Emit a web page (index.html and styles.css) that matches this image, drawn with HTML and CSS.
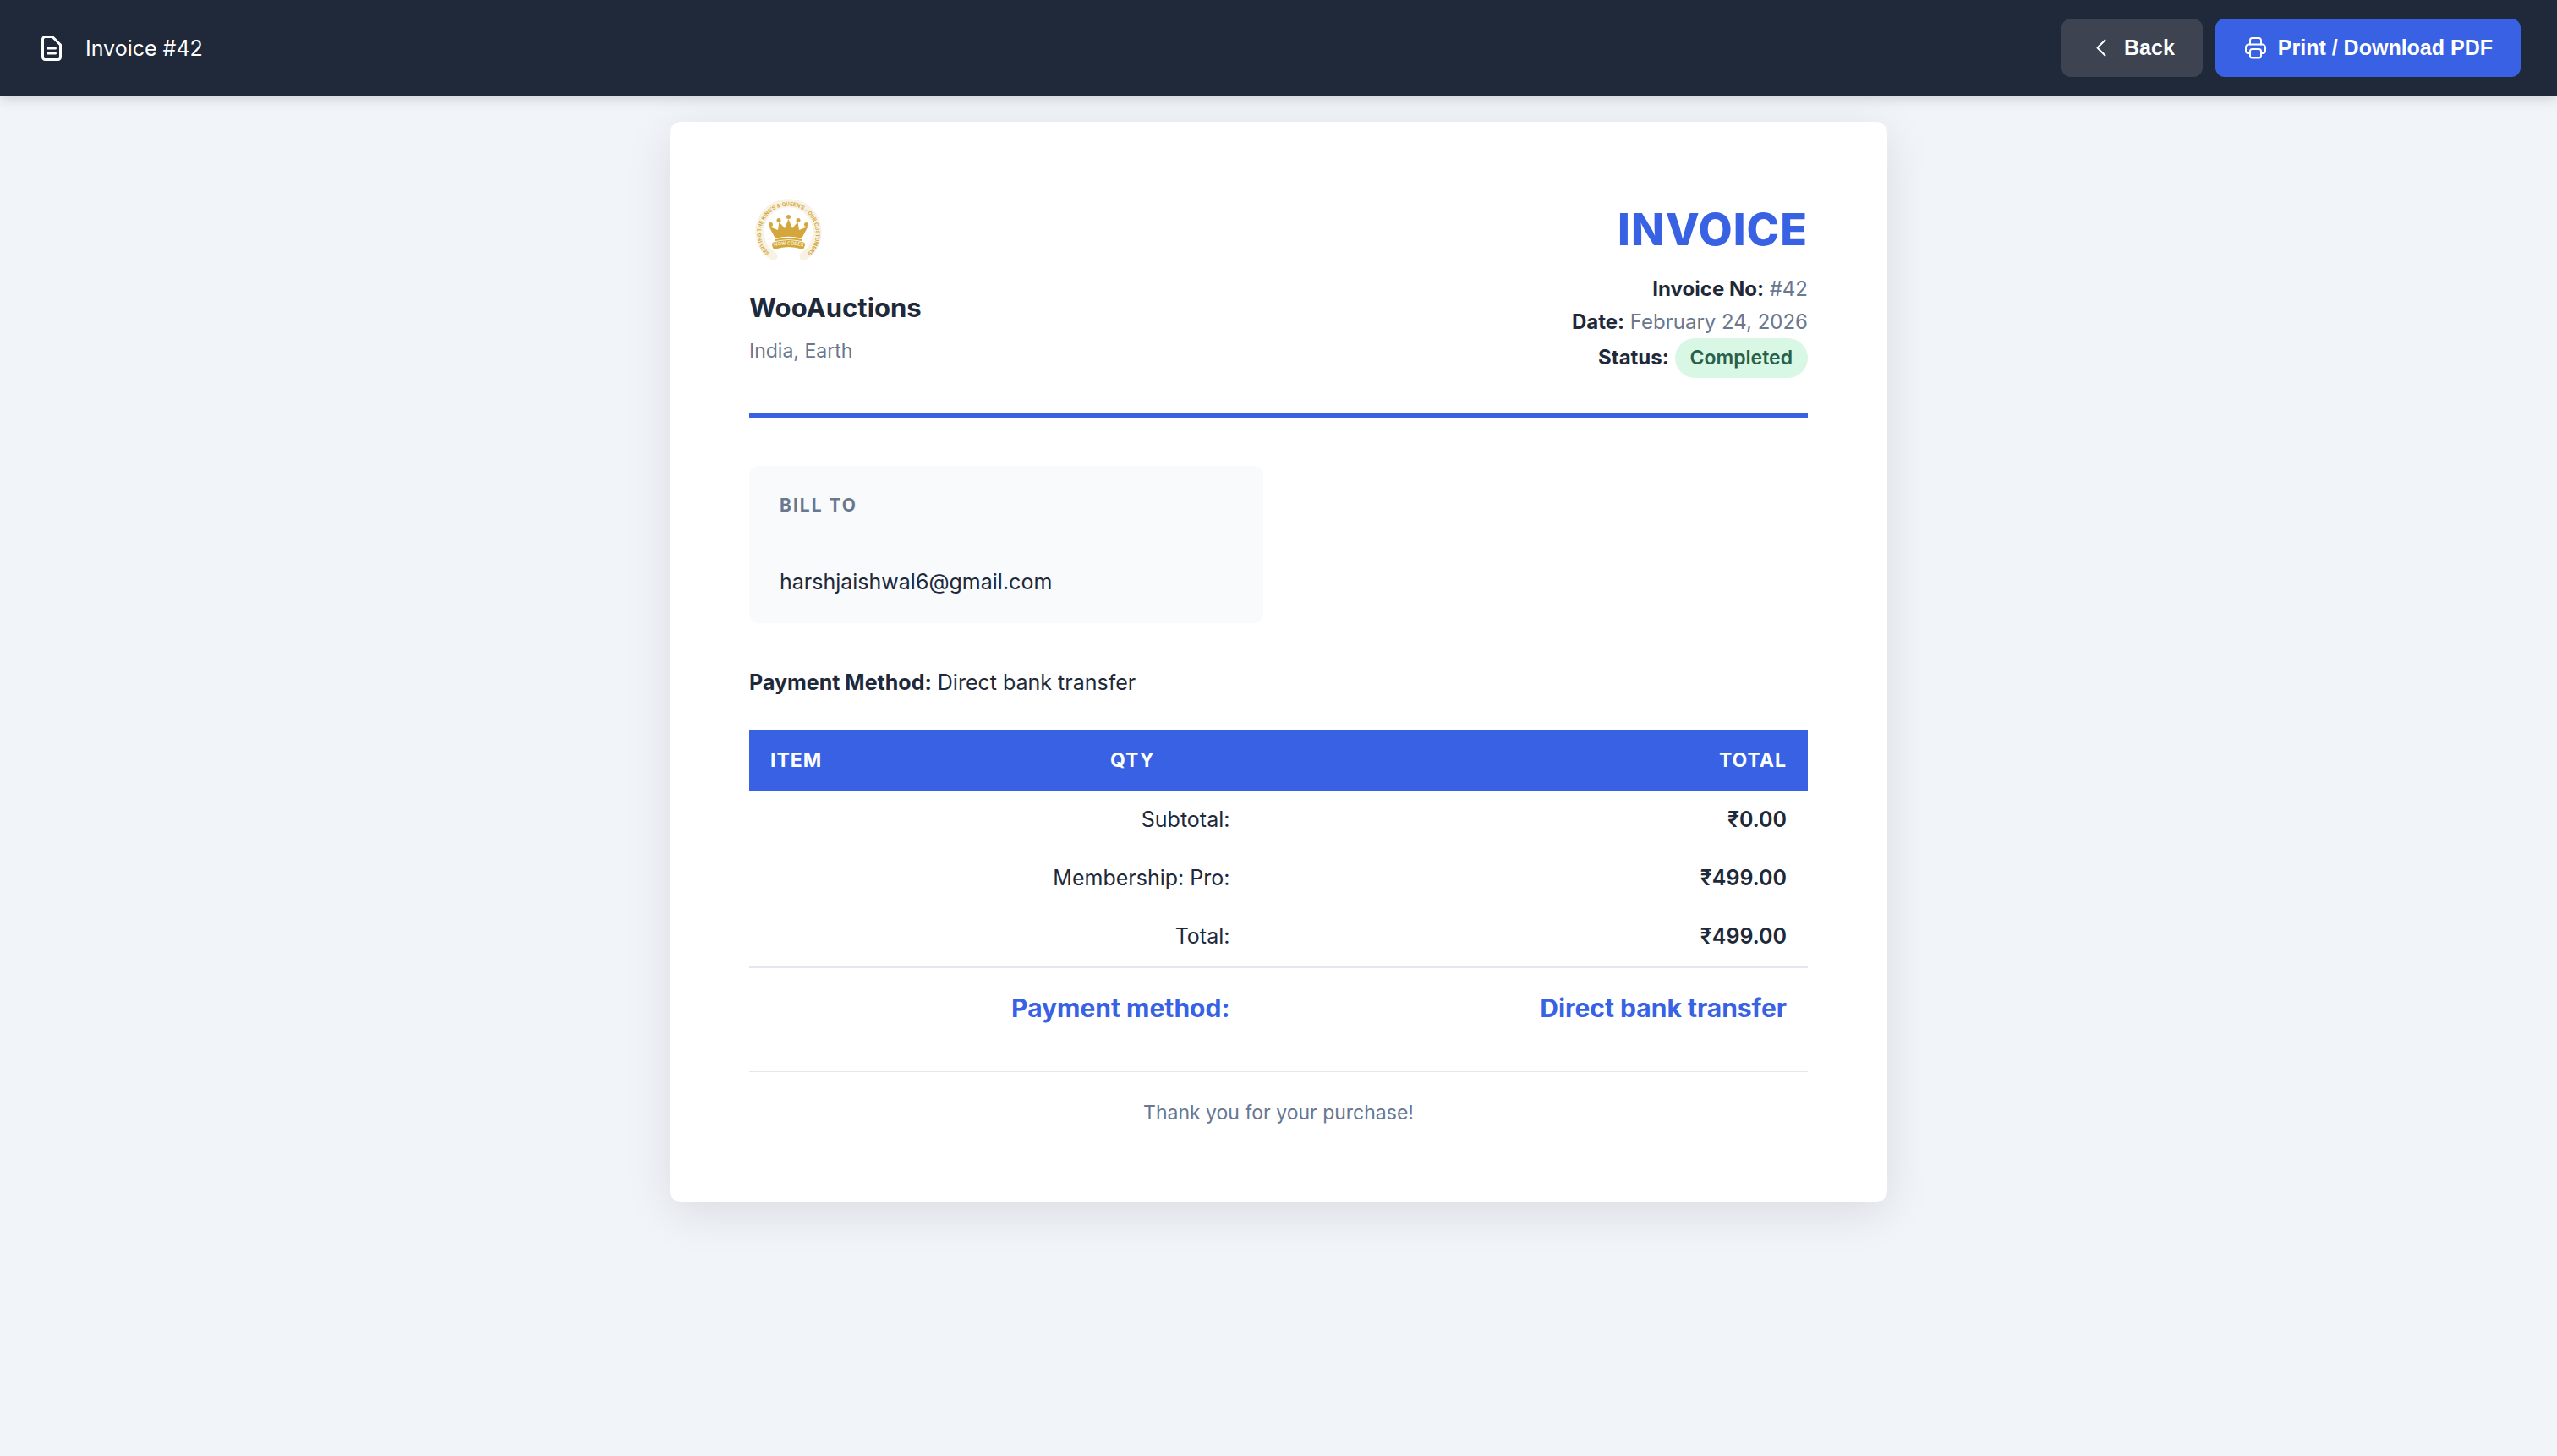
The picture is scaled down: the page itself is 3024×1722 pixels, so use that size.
FILE: index.html
```html
<!DOCTYPE html>
<html lang="en">
<head>
    <meta charset="UTF-8">
    <meta name="viewport" content="width=device-width, initial-scale=1.0">
    <title>Invoice #42</title>
    <link rel="stylesheet" href="styles.css">
</head>
<body>
    <header class="toolbar">
        <div class="toolbar-title">
            <svg class="doc-icon" viewBox="0 0 24 30" aria-hidden="true">
                <path d="M4.500 1.500h8.500l9.500 9.500V25.500a3 3 0 0 1-3 3H4.500a3 3 0 0 1-3-3V4.500a3 3 0 0 1 3-3z"/>
                <path d="M7.500 15h9M7.500 21h9"/>
            </svg>
            <span>Invoice #42</span>
        </div>
        <div class="toolbar-actions">
            <button type="button" class="btn btn-back">
                <svg class="btn-icon" viewBox="0 0 29 29" aria-hidden="true">
                    <path d="M18.500 5.500l-9 9 9 9"/>
                </svg>
                Back
            </button>
            <button type="button" class="btn btn-print" onclick="window.print()">
                <svg class="btn-icon" viewBox="0 0 29 29" aria-hidden="true">
                    <path d="M8 10.500V5.500a2.500 2.500 0 0 1 2.500-2.500h8a2.500 2.500 0 0 1 2.500 2.500v5"/>
                    <path d="M8 21H5.500a2.500 2.500 0 0 1-2.500-2.500V14a3.500 3.500 0 0 1 3.500-3.500h16A3.500 3.500 0 0 1 26 14v4.500a2.500 2.500 0 0 1-2.500 2.500H21"/>
                    <rect x="8" y="16" width="13" height="10.500" rx="2.500"/>
                </svg>
                Print / Download PDF
            </button>
        </div>
    </header>

    <main class="invoice">
        <div class="invoice-header">
            <div class="company">
                <svg class="logo" viewBox="0 0 184 184" role="img" aria-label="Wow Codes">
                    <path class="logo-ring" d="M57 144A68 68 0 1 1 129 144"/>
                    <path id="ringText" fill="none" d="M54 142A65 65 0 1 1 132 142"/>
                    <text class="ring-text"><textPath href="#ringText" startOffset="50%">SERVING THE KING'S &amp; QUEEN'S - OUR CUSTOMERS</textPath></text>
                    <g class="logo-crown">
                        <circle cx="51" cy="69" r="5"/>
                        <circle cx="70" cy="59" r="5"/>
                        <circle cx="93" cy="51" r="5"/>
                        <circle cx="116" cy="59" r="5"/>
                        <circle cx="135" cy="69" r="5"/>
                        <path d="M47 74l21 8 3-19 13 15 9-22 9 22 13-15 3 19 21-8-15 28Q93 93 62 102z"/>
                        <path d="M62 104Q93 97 124 104v4Q93 101 62 108z"/>
                        <path d="M57 111Q93 101 129 111q4 2 3 6l-2 7q-2 4-6 3Q93 117 62 127q-4 1-6-3l-2-7q-1-4 3-6z"/>
                    </g>
                    <path id="bandText" fill="none" d="M52 123Q93 111 134 123"/>
                    <text class="band-text"><textPath href="#bandText" startOffset="50%">WOW CODES</textPath></text>
                </svg>
                <h2 class="company-name">WooAuctions</h2>
                <p class="company-address">India, Earth</p>
            </div>
            <div class="invoice-meta">
                <h1 class="invoice-title">INVOICE</h1>
                <p><strong>Invoice No:</strong> #42</p>
                <p><strong>Date:</strong> February 24, 2026</p>
                <p><strong>Status:</strong> <span class="status">Completed</span></p>
            </div>
        </div>

        <section class="bill-to">
            <h3>BILL TO</h3>
            <p>harshjaishwal6@gmail.com</p>
        </section>

        <p class="payment"><strong>Payment Method:</strong> Direct bank transfer</p>

        <table class="items">
            <colgroup>
                <col class="col-item">
                <col class="col-qty">
                <col>
            </colgroup>
            <thead>
                <tr>
                    <th>ITEM</th>
                    <th class="center">QTY</th>
                    <th class="right">TOTAL</th>
                </tr>
            </thead>
            <tfoot>
                <tr>
                    <td colspan="2">Subtotal:</td>
                    <td class="amount">₹0.00</td>
                </tr>
                <tr>
                    <td colspan="2">Membership: Pro:</td>
                    <td class="amount">₹499.00</td>
                </tr>
                <tr>
                    <td colspan="2">Total:</td>
                    <td class="amount">₹499.00</td>
                </tr>
                <tr class="last">
                    <td colspan="2">Payment method:</td>
                    <td class="amount">Direct bank transfer</td>
                </tr>
            </tfoot>
        </table>

        <footer class="invoice-footer">Thank you for your purchase!</footer>
    </main>
</body>
</html>
```
FILE: styles.css
```css
*{
    margin: 0;
    padding: 0;
    box-sizing: border-box;
}
body{
    min-height: 100vh;
    background-color: #f1f5fa;
    color: #202939;
    font-family: Inter, "Liberation Sans", sans-serif;
    font-size: 25px;
    line-height: 40px;
}

/* toolbar */
.toolbar{
    position: relative;
    z-index: 10;
    display: flex;
    justify-content: space-between;
    align-items: center;
    padding: 22px 43px;
    background-color: #202939;
    color: #fff;
    box-shadow: 0 4px 14px rgba(0, 0, 0, 0.15);
}
.toolbar-title{
    display: flex;
    align-items: center;
    gap: 28px;
    padding-left: 6px;
}
.doc-icon{
    width: 24px;
    height: 30px;
    fill: none;
    stroke: #fff;
    stroke-width: 3;
    stroke-linecap: round;
    stroke-linejoin: round;
}
.toolbar-actions{
    display: flex;
    gap: 15px;
}
.btn{
    display: flex;
    align-items: center;
    gap: 12px;
    padding: 20px 33px;
    border: 0;
    border-radius: 11px;
    color: #fff;
    font-family: "Liberation Sans", Arial, sans-serif;
    font-size: 25px;
    font-weight: bold;
    line-height: 29px;
    cursor: pointer;
}
.btn-back{
    background-color: #3d4351;
}
.btn-print{
    background-color: #3862e3;
}
.btn-icon{
    width: 29px;
    height: 29px;
    fill: none;
    stroke: #fff;
    stroke-width: 2;
    stroke-linecap: round;
    stroke-linejoin: round;
}

/* invoice sheet */
.invoice{
    max-width: 1440px;
    margin: 31px auto;
    padding: 87px 94px;
    background-color: #fff;
    border-radius: 14px;
    box-shadow: 0 12px 54px rgba(0, 0, 0, 0.1);
}
.invoice-header{
    display: flex;
    justify-content: space-between;
    align-items: flex-start;
    padding-bottom: 42px;
    border-bottom: 5px solid #3862e3;
    margin-bottom: 57px;
}
.logo{
    display: block;
    width: 92px;
    height: 92px;
    margin-bottom: 15px;
}
.logo-ring{
    fill: none;
    stroke: #f8f2e4;
    stroke-width: 20;
    stroke-linecap: round;
}
.ring-text,
.band-text{
    font-family: Roboto, sans-serif;
    font-weight: bold;
    text-anchor: middle;
}
.ring-text{
    fill: #d6aa3e;
    font-size: 13px;
}
.logo-crown{
    fill: #d3a73b;
}
.band-text{
    fill: #f8edcf;
    font-size: 12px;
}
.company-name{
    font-size: 31px;
    line-height: 51px;
    margin-bottom: 8px;
}
.company-address{
    color: #697890;
    font-size: 23px;
    line-height: 37px;
}
.invoice-meta{
    text-align: right;
    color: #697890;
    font-size: 24px;
    line-height: 39px;
}
.invoice-meta strong{
    color: #202939;
}
.invoice-title{
    color: #3862e3;
    font-size: 52px;
    font-weight: 800;
    line-height: 82px;
    letter-spacing: 1px;
    margin-bottom: 9px;
}
.status{
    display: inline-block;
    padding: 6px 18px;
    border-radius: 36px;
    background-color: #d9f7e5;
    color: #28604a;
    font-size: 23px;
    font-weight: 600;
    line-height: 35px;
}
.bill-to{
    width: 608px;
    max-width: 100%;
    padding: 29px 36px;
    background-color: #f8fafc;
    border-radius: 11px;
    margin-bottom: 50px;
}
.bill-to h3{
    color: #697890;
    font-size: 21px;
    line-height: 35px;
    letter-spacing: 2px;
    margin-bottom: 53px;
}
.payment{
    margin-bottom: 36px;
}

/* items table */
.items{
    width: 100%;
    table-layout: fixed;
    border-collapse: collapse;
}
.col-item{
    width: 25%;
}
.col-qty{
    width: 22.4%;
}
.items th{
    padding: 18px 25px;
    background-color: #3862e3;
    color: #fff;
    font-size: 23px;
    line-height: 36px;
    letter-spacing: 1px;
    text-align: left;
}
.items th.center{
    text-align: center;
}
.items th.right{
    text-align: right;
}
.items td{
    padding: 14px 25px;
    line-height: 41px;
    text-align: right;
}
.items .amount{
    font-weight: 600;
}
.items .last td{
    padding: 24px 25px;
    border-top: 3px solid #e4e8ee;
    color: #3862e3;
    font-size: 30px;
    font-weight: bold;
    line-height: 46px;
}
.invoice-footer{
    margin-top: 28px;
    padding-top: 30px;
    border-top: 1px solid #e4e8ee;
    color: #697890;
    font-size: 23px;
    line-height: 37px;
    text-align: center;
}
```
